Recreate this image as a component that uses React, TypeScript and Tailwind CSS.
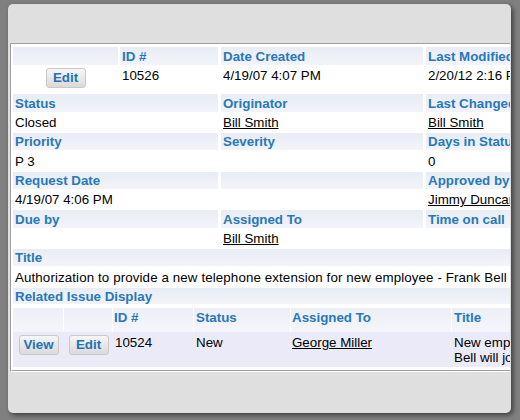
import React from "react";

const LBL = "text-[#2878bd] font-bold";
const HDR = "bg-linear-to-b from-[#e8ecf4] to-[#f2f4f9]";

function Btn({ children, w = "w-[40px]" }: { children: React.ReactNode; w?: string }) {
  return (
    <div
      className={`${w} h-[20px] flex items-center justify-center rounded-[3px] border border-[#c9c9c9] bg-linear-to-b from-[#f6f6f6] to-[#dadada] text-[#1f72b6] font-bold text-[13.33px] leading-none`}
    >
      {children}
    </div>
  );
}

function Link({ children }: { children: React.ReactNode }) {
  return <span className="underline text-black">{children}</span>;
}

function Row({
  h,
  header,
  cells,
}: {
  h: string;
  header?: boolean;
  cells: React.ReactNode[];
}) {
  const widths = ["w-[205px]", "w-[202px]", "w-[220px]"];
  return (
    <div className={`flex gap-x-[3px] ${h} shrink-0`}>
      {cells.map((c, i) => (
        <div
          key={i}
          className={`${widths[i]} shrink-0 pl-[2px] whitespace-nowrap flex items-center ${header ? HDR + " " + LBL : "text-black"}`}
        >
          {c}
        </div>
      ))}
    </div>
  );
}

export default function App() {
  return (
    <div
      className="w-[520px] h-[420px] bg-[#808080] overflow-hidden pt-[4px] pl-[8px]"
      style={{ fontFamily: '"Liberation Sans", Arial, sans-serif' }}
    >
      <div className="w-[503px] h-[409px] bg-[#dfdfdf] rounded-[5px] shadow-[2px_2px_5px_rgba(0,0,0,0.55)] pt-[39px] pl-[2px] overflow-hidden">
        <div className="w-[500px] border-t border-l border-b border-t-[#a0a0a0] border-l-[#a0a0a0] border-b-white bg-white overflow-hidden">
          <div className="border-t border-l border-b border-t-white border-l-white border-b-[#a0a0a0] pl-[1px] pt-[2px] pb-[3px] text-[13.33px] leading-[15px] flex flex-col">
            {/* top header row */}
            <div className="flex h-[18px] shrink-0">
              <div className={`w-[105px] shrink-0 ${HDR}`} />
              <div className={`w-[98px] shrink-0 ml-[2px] pl-[2px] flex items-center ${HDR} ${LBL}`}>ID #</div>
              <div className={`w-[202px] shrink-0 ml-[3px] pl-[2px] flex items-center ${HDR} ${LBL}`}>Date Created</div>
              <div className={`w-[220px] shrink-0 ml-[3px] pl-[2px] flex items-center whitespace-nowrap ${HDR} ${LBL}`}>Last Modified Date</div>
            </div>
            <div className="flex h-[29px] shrink-0">
              <div className="w-[105px] shrink-0 flex justify-center pt-[3px]">
                <Btn>Edit</Btn>
              </div>
              <div className="w-[98px] shrink-0 ml-[2px] pl-[2px] pt-[3px]">10526</div>
              <div className="w-[202px] shrink-0 ml-[3px] pl-[2px] pt-[3px]">4/19/07 4:07 PM</div>
              <div className="w-[220px] shrink-0 ml-[3px] pl-[2px] pt-[3px] whitespace-nowrap">2/20/12 2:16 PM</div>
            </div>

            <Row h="h-[18px]" header cells={["Status", "Originator", "Last Changed By"]} />
            <Row h="h-[21px]" cells={["Closed", <Link>Bill Smith</Link>, <Link>Bill Smith</Link>]} />
            <Row h="h-[17px]" header cells={["Priority", "Severity", "Days in Status"]} />
            <Row h="h-[22px]" cells={["P 3", "", "0"]} />
            <Row h="h-[17px]" header cells={["Request Date", "", "Approved by"]} />
            <Row h="h-[21px]" cells={["4/19/07 4:06 PM", "", <Link>Jimmy Duncan</Link>]} />
            <Row h="h-[18px]" header cells={["Due by", "Assigned To", "Time on call"]} />
            <Row h="h-[21px]" cells={["", <Link>Bill Smith</Link>, ""]} />

            <div className={`h-[17px] shrink-0 pl-[2px] flex items-center ${HDR} ${LBL}`}>Title</div>
            <div className="h-[22px] shrink-0 pl-[2px] flex items-center whitespace-nowrap text-black tracking-[0.11px]">
              Authorization to provide a new telephone extension for new employee - Frank Bell
            </div>
            <div className={`h-[16px] shrink-0 pl-[2px] flex items-center ${HDR} ${LBL}`}>Related Issue Display</div>
            <div className="h-[4px] shrink-0" />

            {/* nested table header */}
            <div className="flex h-[24px] shrink-0 gap-x-[1px]">
              <div className="w-[50px] shrink-0 bg-linear-to-b from-[#eceff6] to-[#f5f6fb]" />
              <div className="w-[48px] shrink-0 bg-linear-to-b from-[#eceff6] to-[#f5f6fb]" />
              <div className={`w-[80px] shrink-0 pl-[1px] pt-[2px] bg-linear-to-b from-[#eceff6] to-[#f5f6fb] ${LBL}`}>ID #</div>
              <div className={`w-[96px] shrink-0 pl-[2px] pt-[2px] bg-linear-to-b from-[#eceff6] to-[#f5f6fb] ${LBL}`}>Status</div>
              <div className={`w-[160px] shrink-0 pl-[1px] pt-[2px] bg-linear-to-b from-[#eceff6] to-[#f5f6fb] ${LBL}`}>Assigned To</div>
              <div className={`w-[150px] shrink-0 pl-[2px] pt-[2px] bg-linear-to-b from-[#eceff6] to-[#f5f6fb] ${LBL}`}>Title</div>
            </div>
            {/* nested table data */}
            <div className="flex h-[35px] shrink-0 bg-[#eaeaf9] text-black">
              <div className="w-[51px] shrink-0 flex justify-center pt-[3px]">
                <Btn w="w-[40px]">View</Btn>
              </div>
              <div className="w-[49px] shrink-0 flex justify-center pt-[3px]">
                <Btn>Edit</Btn>
              </div>
              <div className="w-[81px] shrink-0 pl-[2px] pt-[3px]">10524</div>
              <div className="w-[97px] shrink-0 pl-[2px] pt-[3px]">New</div>
              <div className="w-[161px] shrink-0 pl-[1px] pt-[3px]">
                <Link>George Miller</Link>
              </div>
              <div className="w-[150px] shrink-0 pl-[2px] pt-[3px] whitespace-nowrap">
                <div>New employee Frank</div>
                <div>Bell will join the team</div>
              </div>
            </div>
          </div>
        </div>
      </div>
    </div>
  );
}
